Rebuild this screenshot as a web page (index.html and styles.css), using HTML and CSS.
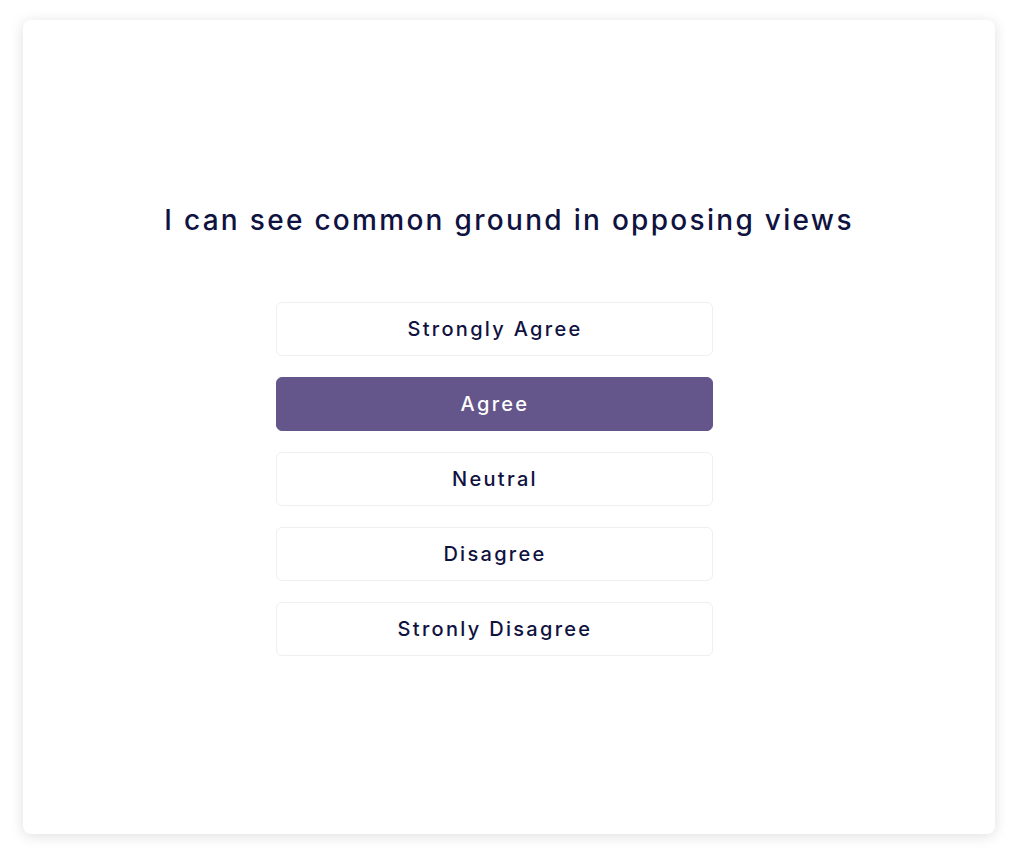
FILE: index.html
```html
<!DOCTYPE html>
<html lang="en">
<head>
<meta charset="utf-8">
<title>Survey question</title>
<link rel="stylesheet" href="styles.css">
</head>
<body>
  <main class="card">
    <h1 class="question">I can see common ground in opposing views</h1>
    <div class="options">
      <button class="option">Strongly Agree</button>
      <button class="option selected">Agree</button>
      <button class="option">Neutral</button>
      <button class="option">Disagree</button>
      <button class="option">Stronly Disagree</button>
    </div>
  </main>
</body>
</html>
```
FILE: styles.css
```css
html, body {
  margin: 0;
  background: #ffffff;
}
body {
  padding: 20px 24px 28px 23px;
  font-family: "Inter", "Liberation Sans", sans-serif;
  color: #10123f;
}
.card {
  height: 814px;
  box-sizing: border-box;
  background: #ffffff;
  border-radius: 8px;
  box-shadow: 0 2px 14px rgba(0, 0, 0, 0.13);
  padding-top: 182px;
  display: flex;
  flex-direction: column;
  align-items: center;
}
.question {
  margin: 0;
  font-size: 28px;
  line-height: 36px;
  font-weight: 500;
  letter-spacing: 2.3px;
}
.options {
  margin-top: 64px;
  margin-right: 30px;
  display: flex;
  flex-direction: column;
  gap: 21px;
  width: 437px;
}
.option {
  height: 54px;
  box-sizing: border-box;
  border: 1px solid #efeff1;
  border-radius: 6px;
  background: #ffffff;
  font-family: inherit;
  font-size: 20px;
  font-weight: 500;
  color: #10123f;
  letter-spacing: 2.3px;
  text-indent: 2px;
  cursor: pointer;
}
.option.selected {
  background: #64558b;
  border-color: #64558b;
  color: #ffffff;
}
```
